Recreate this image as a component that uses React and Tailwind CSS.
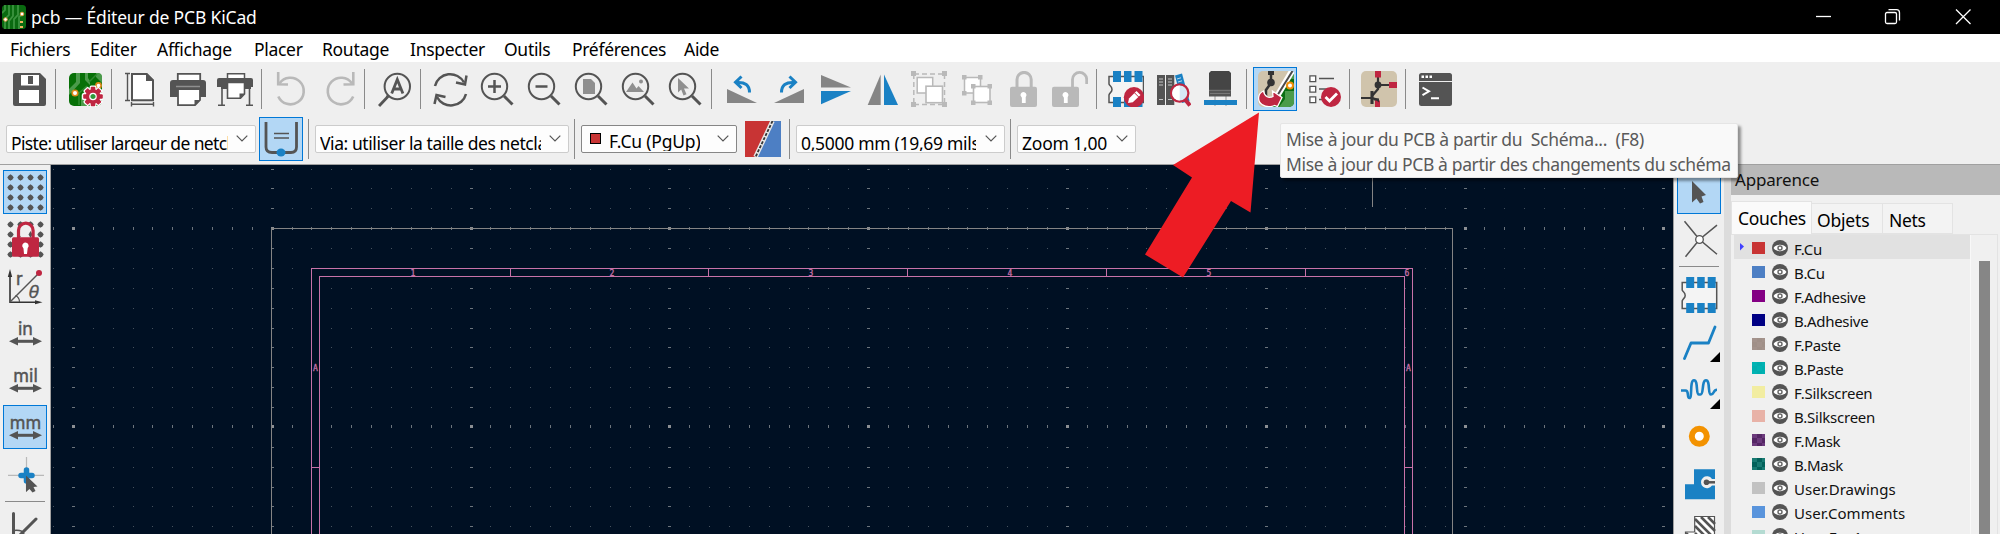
import React from "react";

const G = "#545454";
const B = "#1a81c4";
const R = "#bf2641";
const L = "#b9b9b9";

function Svg({ children, className = "" }) {
  return (
    <svg viewBox="0 0 36 36" fill="none" className={"block size-9 shrink-0 " + className}>
      {children}
    </svg>
  );
}

/* ---------- top toolbar icons ---------- */

const Save = () => (
  <Svg>
    <path d="M4 2H29L35 8V33a2 2 0 0 1-2 2H4a2 2 0 0 1-2-2V4a2 2 0 0 1 2-2Z" fill={G} />
    <path d="M10 4H28V14.5H10Z" fill="#fff" />
    <path d="M17 5H22V13H17Z" fill={G} />
    <path d="M8 19H28V32H8Z" fill="#fff" />
  </Svg>
);

const gearTeeth = [0, 45, 90, 135, 180, 225, 270, 315];

const BoardSetup = () => (
  <Svg>
    <rect x="2" y="2" width="33" height="33" rx="5" fill="#077007" />
    <path d="M2 18 9 11V2h4v10l-11 12ZM18 2v7l5 5v-4l-2-3V2h8v4l6 6V6a4 4 0 0 0-4-4ZM14 35V24l6-6 4 4-5 6v7Z" fill="#4b9b4b" />
    <path d="M30 3 22 11M12 34V22l8-7" stroke="#2f8a2f" strokeWidth="1.5" />
    <circle cx="8" cy="22" r="2.8" fill="#fff" stroke="#df8a1b" strokeWidth="1.6" />
    <circle cx="31.5" cy="14.500" r="2.6" fill="#fff" stroke="#df8a1b" strokeWidth="1.6" />
    <g transform="translate(26 25.500)">
      {gearTeeth.map((a) => (
        <rect key={"o" + a} x="-3.4" y="-11" width="6.8" height="8" rx="1.5" fill="#fff" transform={`rotate(${a})`} />
      ))}
      <circle r="8.500" fill="#fff" />
      {gearTeeth.map((a) => (
        <rect key={a} x="-2.3" y="-9.8" width="4.600" height="7" rx="1" fill={R} transform={`rotate(${a})`} />
      ))}
      <circle r="7.3" fill={R} />
      <circle r="3.2" fill="#2f9a3a" stroke="#fff" strokeWidth="1.2" />
    </g>
  </Svg>
);

const Page = () => (
  <Svg>
    <path d="M9 3H23.500L30 9.500V29.300H9Z" fill="#fff" stroke={G} strokeWidth="2" />
    <path d="M23 2H24L31 9V10H23Z" fill={G} />
    <path d="M4.500 2.500V29.500M2 2.500H7M2 29.500H7M8.500 33.300H30.500M8.500 31V35.500M30.500 31V35.500" stroke={G} strokeWidth="1.400" />
  </Svg>
);

const Print = () => (
  <Svg>
    <path d="M7.800 11V2.800H30.200V11" fill="#fff" stroke={G} strokeWidth="1.800" />
    <path d="M3 9H33a3 3 0 0 1 3 3V26H0V12a3 3 0 0 1 3-3Z" fill={G} />
    <path d="M6 15.500H30" stroke="#8f8f8f" strokeWidth="1.500" />
    <path d="M8 18H30V29L25 34.200H8Z" fill="#fff" stroke={G} strokeWidth="1.800" />
    <path d="M24.500 29H30.500L24.500 35Z" fill={G} />
  </Svg>
);

const Plot = () => (
  <Svg>
    <path d="M10.500 8V2.800H27.500V8" fill="#fff" stroke={G} strokeWidth="1.500" />
    <path d="M2 7H34a2 2 0 0 1 2 2V16H0V9a2 2 0 0 1 2-2Z" fill={G} />
    <path d="M5 16V34M32.500 16V34M1 34.300H8M29 34.300H36" stroke={G} strokeWidth="1.600" />
    <path d="M4 17H10M28 17H34" stroke={G} strokeWidth="2" />
    <path d="M10.500 11.500H27.500V23L23.500 27.200H10.500Z" fill="#fff" stroke={G} strokeWidth="1.600" />
    <path d="M22.500 22.500H28L22.500 28Z" fill={G} />
  </Svg>
);

const UndoShape = () => (
  <g stroke={L} strokeWidth="2.600">
    <path d="M6.500 12.500A13.300 13.300 0 1 1 5.300 25.500" />
    <path d="M5.200 1V13.200L15 13.500" />
  </g>
);
const Undo = () => (
  <Svg>
    <UndoShape />
  </Svg>
);
const Redo = () => (
  <Svg>
    <g transform="translate(38.500 0) scale(-1 1)">
      <UndoShape />
    </g>
  </Svg>
);

const Find = () => (
  <Svg>
    <circle cx="21.300" cy="15.500" r="12.700" stroke={G} strokeWidth="2" />
    <path d="M12 24.500 10.500 26" stroke={G} strokeWidth="2" />
    <path d="M11.500 26 4 34" stroke={G} strokeWidth="2.800" strokeLinecap="square" />
    <path d="M15.700 22.500 21.300 8.500 26.900 22.500M17.500 18H25" stroke={G} strokeWidth="2.800" />
  </Svg>
);

const Refresh = () => (
  <Svg>
    <g stroke={G} strokeWidth="2.500">
      <path d="M3 15A15.500 15 0 0 1 32 11.500" />
      <path d="M34.500 4.500 33 13.500 24 11.500" />
      <path d="M34 23A15.500 15 0 0 1 5 26" />
      <path d="M2.500 33 4.500 24 13.500 26" />
    </g>
  </Svg>
);

const Lens = ({ children }) => (
  <Svg>
    {children}
    <circle cx="15.500" cy="15.500" r="12.700" stroke={G} strokeWidth="2" />
    <path d="M25 25 33.500 33.500" stroke={G} strokeWidth="3" />
  </Svg>
);
const ZoomIn = () => (
  <Lens>
    <path d="M9 15.500H22M15.500 9V22" stroke={G} strokeWidth="2.500" />
  </Lens>
);
const ZoomOut = () => (
  <Lens>
    <path d="M9.500 15.500H21.500" stroke={G} strokeWidth="2.500" />
  </Lens>
);
const ZoomPage = () => (
  <Lens>
    <path d="M10 8H18L22 12V23H10Z" fill="#8f8f8f" />
  </Lens>
);
const ZoomObjects = () => (
  <Lens>
    <path d="M6 21 12.500 11.500 16.500 17.500 18.500 15 24 21Z" fill="#8f8f8f" />
    <circle cx="21" cy="10.500" r="2" fill="#8f8f8f" />
  </Lens>
);
const ZoomSelection = () => (
  <Lens>
    <path d="M11 7V21.500L14.200 18.500 16.500 24.500 19.500 23.300 17 17.500H22Z" fill="#8f8f8f" />
  </Lens>
);

const RotateShape = () => (
  <g>
    <path d="M4 18V32H34Z" fill="#858585" />
    <path d="M26.500 21.500C26.500 14 22 11 14 11.500" stroke={B} strokeWidth="3" />
    <path d="M18.500 5.500 12.500 11.200 18.500 17" stroke={B} strokeWidth="3" />
  </g>
);
const RotateCcw = () => (
  <Svg>
    <RotateShape />
  </Svg>
);
const RotateCw = () => (
  <Svg>
    <g transform="translate(38 0) scale(-1 1)">
      <RotateShape />
    </g>
  </Svg>
);
const FlipV = () => (
  <Svg>
    <path d="M4 4V16.500H34Z" fill="#858585" />
    <path d="M4 20H34L4 33.300Z" fill={B} />
  </Svg>
);
const FlipH = () => (
  <Svg>
    <path d="M16.700 3.500V34H3.700Z" fill="#858585" />
    <path d="M20 3.500V34H34Z" fill={B} />
  </Svg>
);

const Group = () => (
  <Svg>
    <path d="M3 3H33M3 33.500H33" stroke={L} strokeWidth="1.500" strokeDasharray="5 3" />
    <path d="M2.800 3V33M33.500 3V33" stroke={L} strokeWidth="1.500" strokeDasharray="5 3" />
    <path d="M0 0h5v5H0ZM31 0h5v5h-5ZM0 31h5v5H0ZM31 31h5v5h-5Z" fill={L} />
    <rect x="6.200" y="6.500" width="15.500" height="15.500" fill="#fff" stroke={L} strokeWidth="1.500" />
    <rect x="15" y="15.200" width="16.500" height="16.500" fill="#fff" stroke={L} strokeWidth="1.600" />
  </Svg>
);
const Ungroup = () => (
  <Svg>
    <rect x="6.500" y="6.500" width="16" height="15.500" fill="#fff" stroke={L} strokeWidth="1.500" />
    <path d="M4 4h4.500v4.500H4ZM20 4h4.500v4.500H20ZM4 20h4.500v4.500H4Z" fill={L} />
    <rect x="15.500" y="15.500" width="16.500" height="16" fill="#fff" stroke={L} strokeWidth="1.600" />
    <path d="M13 13h4.500v4.500H13ZM29.500 13H34v4.500h-4.500ZM13 29.500h4.500V34H13ZM29.500 29.500H34V34h-4.500Z" fill={L} />
  </Svg>
);
const Lock = () => (
  <Svg>
    <path d="M12 17V8.500a7 7 0 0 1 14.200 0V17" stroke={L} strokeWidth="3" />
    <rect x="5" y="15.700" width="27" height="20.300" rx="2" fill={L} />
    <path d="M15.500 24.500a3 3 0 1 1 5.200 1.600V32h-3.800V26.800Z" fill="#fff" />
  </Svg>
);
const Unlock = () => (
  <Svg>
    <path d="M20.500 17V8.500a7 7 0 0 1 14.200 0V13" stroke={L} strokeWidth="2.800" />
    <rect x="0" y="15.700" width="27" height="20.300" rx="2" fill={L} />
    <path d="M10.500 24.500a3 3 0 1 1 5.200 1.600V32h-3.800V26.800Z" fill="#fff" />
  </Svg>
);

const FpBody = () => (
  <g>
    <path d="M35.500 5.500V31.500H1V24C1.500 21.500 4 21.500 4 18.500 4 15 1.500 15 1 13V5.500Z" stroke={G} strokeWidth="1.500" fill="#f4f4f4" />
    <path d="M5 0h8v11H5ZM16 0h7.500v11H16ZM26.500 0h8v11h-8ZM5 26h8v10H5ZM16 26h7.500v10H16ZM26.500 26h8v10h-8Z" fill={B} />
  </g>
);
const FpEditor = () => (
  <Svg>
    <FpBody />
    <circle cx="26" cy="26.300" r="10.200" fill={R} />
    <path d="M20 32 21 27.500 28.500 20 32.500 24 24.800 31.300Z" fill="#fff" />
    <path d="M26.500 21.800 30.700 26" stroke={R} strokeWidth="1" />
  </Svg>
);
const FpBrowser = () => (
  <Svg>
    <path d="M2 4h8v30H2ZM11 4h8.300v30H11Z" fill={G} />
    <path d="M4 8h4M4 11h4M4 14h4M13 8h4M13 11h4M13 14h4M4 28.500h4M13 28.500h4" stroke="#c4c4c4" strokeWidth="1.100" />
    <path d="M20 4.500 27 2.500 34.500 30 27 32Z" fill={B} />
    <path d="M22 8 26 6.800M23 11 27 9.800" stroke="#bcd9ee" strokeWidth="1" />
    <path d="M30.500 29 35 34.500" stroke={R} strokeWidth="4" />
    <circle cx="24.700" cy="22" r="8.700" fill="#d7e8f5" stroke={R} strokeWidth="2.200" />
    <path d="M24.700 14.500a7.500 7.500 0 0 0 0 15Z" fill="#fff" />
  </Svg>
);
const Viewer3d = () => (
  <Svg>
    <path d="M13 24V35M24 24V35" stroke="#b5b5b5" strokeWidth="1.500" />
    <path d="M9 0H27l2 2V19H7V2Z" fill="#454545" />
    <path d="M7 19H29V25.500H7Z" fill={G} />
    <path d="M7 19.300H29M8 22.500H28" stroke="#777" strokeWidth="1" />
    <path d="M2 29H35V34H2Z" fill={B} />
  </Svg>
);
const UpdatePcb = () => (
  <Svg>
    <rect width="36" height="36" rx="5" fill="#d0c4ac" />
    <path d="M34 0a4 4 0 0 1 2 4V31a5 5 0 0 1-5 5H13Z" fill="#0a6f12" />
    <path d="M31 0 24 13h5l3-5h4V3ZM36 20h-9v8l-6 8H31a5 5 0 0 0 5-5Z" fill="#4b9b4b" />
    <path d="M13 0V12L8 19V26" stroke="#333" strokeWidth="2.500" />
    <path d="M10 0h6v4h-6Z" fill="#333" />
    <circle cx="13" cy="11.500" r="3.800" fill="#333" />
    <path d="M34 0 15 32" stroke="#fff" strokeWidth="6" />
    <path d="M34.500 0 14 33" stroke="#4a4a4a" strokeWidth="2" />
    <circle cx="32" cy="14.500" r="3" fill="#fff" stroke="#f08f0a" strokeWidth="2" />
    <path d="M5.500 20C-.5 22.500-1 30 4 33.500 8 36.200 13 36 16.500 34.500L19.500 35.500 24 26.500 14.500 20 15 25.500C11 27.500 6.500 26 5.500 20Z" fill={R} stroke="#fff" strokeWidth="1.300" />
  </Svg>
);
const Drc = () => (
  <Svg>
    <path d="M4.900 4.900h5.800v5.800H4.900ZM4.900 15.400h5.800v5.800H4.900ZM4.900 25.900h5.800v5.800H4.900Z" fill="#fff" stroke={G} strokeWidth="1.300" />
    <path d="M14 7.500H29M14 18H22M14 28.500H20" stroke={G} strokeWidth="1.500" />
    <circle cx="26" cy="26" r="10" fill={R} />
    <path d="M20.500 26 24.500 30 32 22.500" stroke="#fff" strokeWidth="2.800" />
  </Svg>
);
const Schematic = () => (
  <Svg>
    <rect width="36" height="36" rx="5" fill="#d0c4ac" />
    <path d="M0 27H11M17 5V15M17 14H30M17 14V18L11 25M11 20V33M12 27 17 31" stroke="#333" strokeWidth="2.200" />
    <path d="M11 20V33" stroke="#333" strokeWidth="3" />
    <circle cx="17" cy="14" r="3.400" fill="#333" />
    <path d="M14 0h6v6.500h-6ZM28 11h8v6h-8ZM14 29.500h5V36h-5Z" fill={R} />
    <path d="M12 26.500 18 31.500V27.500Z" fill="#333" />
  </Svg>
);
const Console = () => (
  <Svg>
    <rect x="2" y="2" width="33" height="33" rx="2.500" fill={G} />
    <path d="M2 10.500H35" stroke="#efefef" strokeWidth="1" />
    <path d="M4.500 4.500h2.500v2.500h-2.500ZM8.500 4.500h2.500v2.500h-2.500ZM12.500 4.500h2.500v2.500h-2.500Z" fill="#fff" />
    <path d="M5.500 16.500 12 20.300 5.500 24.200M14 27.300H22" stroke="#fff" strokeWidth="2" />
  </Svg>
);

/* ---------- side toolbar icons ---------- */

const gridStops = [2.5, 12.5, 22.5, 32.5];
const GridDots = () => (
  <g fill={G}>
    {gridStops.map((y) =>
      gridStops.map((x) => (
        <path key={x + "-" + y} d={`M${x} ${y - 3.300}l2 1.600 1.200 1.700-1.200 1.700-2 1.600-2-1.600-1.200-1.700 1.200-1.700Z`} />
      ))
    )}
  </g>
);
const Grid = () => (
  <Svg className="overflow-visible">
    <GridDots />
  </Svg>
);
const GridLock = () => (
  <Svg className="overflow-visible">
    <GridDots />
    <path d="M9 18V9.500a8.700 8.700 0 0 1 17.400 0V18Z" fill="#efefef" />
    <path d="M11 12.500l1.800 2-1.800 2ZM22.500 9l2 3.500-2 3.500-2-3.500Z" fill={G} />
    <path d="M10.500 18V8.500a7.300 7.300 0 0 1 14.600 0V18" stroke={R} strokeWidth="3.200" />
    <rect x="4" y="15.300" width="27" height="19.500" rx="1.500" fill={R} />
    <path d="M14.300 24.500a3.200 3.200 0 1 1 5.400 1.600L19 32h-3l-.5-5.500Z" fill="#fff" />
  </Svg>
);
const Polar = () => (
  <Svg className="overflow-visible">
    <path d="M2 5V33.300H30" stroke="#333" strokeWidth="1.600" />
    <path d="M2 0 4.200 8H-.2ZM34.500 33.300 27 31.300V35.300Z" fill="#333" />
    <path d="M2 33 30 5" stroke={G} strokeWidth="1.500" />
    <path d="M7.500 26.500C10.500 28 11.500 30 11.500 33" stroke={G} strokeWidth="1.200" />
    <circle cx="31" cy="4" r="3" fill={R} />
    <text x="8" y="16" fontSize="18" fill={G} stroke={G} strokeWidth=".4" fontFamily="Inter, sans-serif">r</text>
    <text x="20.500" y="29" fontSize="19" fontStyle="italic" fill={G} stroke={G} strokeWidth=".3" fontFamily="Liberation Sans, sans-serif">θ</text>
  </Svg>
);
const Unit = ({ label }) => (
  <Svg className="overflow-visible">
    <text x="17.500" y="19" fontSize="18" textAnchor="middle" fill={G} stroke={G} strokeWidth=".4" fontFamily="Inter, sans-serif">
      {label}
    </text>
    <path d="M8 25.300H27" stroke={G} strokeWidth="3" />
    <path d="M1 25.300 10 21.100V29.500ZM34 25.300 25 21.100V29.500Z" fill={G} />
  </Svg>
);
const CursorShape = () => (
  <Svg>
    <path d="M-1 18.400H36M18.500 -1V34.500" stroke={L} strokeWidth="1.200" />
    <path d="M13 18.400H24M18.500 13V24" stroke={B} strokeWidth="5.500" strokeLinecap="round" />
    <path d="M18 18.500V35L21.500 32 24.500 35.500 27.500 34 25.500 30 29.500 29.500Z" fill={G} />
  </Svg>
);
const Ratsnest = () => (
  <Svg>
    <path d="M5.500 1.500V36M6 29 28 7" stroke={G} strokeWidth="3" strokeLinecap="round" />
    <path d="M6 18.500C11 18 15 19 16 22" stroke={G} strokeWidth="1.500" />
  </Svg>
);

const Pointer = () => (
  <Svg>
    <path d="M10 6V27.500L14.500 23.500 18 28.500 21.500 27 19.500 21.500 24 20Z" fill={G} />
  </Svg>
);
const LocalRatsnest = () => (
  <Svg className="overflow-visible">
    <path d="M2.500-.8 17.500 17.500 3.500 34.700M35 3.200 17.500 17.500 35 32.200" stroke={G} strokeWidth="1.500" />
    <circle cx="17.500" cy="17.500" r="3.800" fill="#fff" stroke={G} strokeWidth="1.300" />
  </Svg>
);
const AddFp = () => (
  <Svg className="overflow-visible">
    <g transform="translate(-.8 0)">
      <FpBody />
    </g>
  </Svg>
);
const Route = () => (
  <Svg>
    <path d="M2.500 34.500 9 19H26.500L33 3" stroke={B} strokeWidth="2.800" strokeLinecap="round" strokeLinejoin="round" />
  </Svg>
);
const Tune = () => (
  <Svg className="overflow-visible">
    <path d="M-1 19.500H3.500C7.500 19.500 4.500 27 7.500 27 10.500 27 7.500 9.300 12 9.300 16.500 9.300 13.500 23.500 17 23.500H18.500C22 23.500 19.500 9.300 24 9.300 28.500 9.300 25.500 23.500 29 23.500 32.500 23.500 31 18.800 35 18.800" stroke={B} strokeWidth="2.600" />
  </Svg>
);
const Via = () => (
  <Svg>
    <circle cx="17.300" cy="18.300" r="7.500" fill="#fff" stroke="#f39200" strokeWidth="6" />
  </Svg>
);
const Zone = () => (
  <Svg>
    <path d="M12 4.300H33V34.300H3V19.300H12Z" fill={B} />
    <path d="M33 14H30A6 6 0 1 0 30 20.600H33Z" fill="#efefef" />
    <path d="M24 17.300H33" stroke={G} strokeWidth="2.500" />
    <circle cx="24.500" cy="17.300" r="2.800" fill={G} />
  </Svg>
);
const RuleArea = () => (
  <Svg>
    <path d="M12.700 4.500H32.500V36H3.500V20H12.700Z" fill="#fff" stroke={G} strokeWidth="1.200" />
    <path d="M13 7 33 27M13 14 33 34M13 21 29 37M19 5 33 19M26 5 33 12M4 21 20 37" stroke={G} strokeWidth="2.600" />
  </Svg>
);

/* ---------- toolbar pieces ---------- */

function Tool({ icon: Icon, active, corner, side }) {
  return (
    <div
      className={
        "relative flex size-11 shrink-0 items-start border pl-1 " +
        (side ? "pt-1 " : "pt-[3px] ") +
        (active ? "border-[#0078d7] bg-[#b3d7f5]" : "border-transparent")
      }
    >
      <Icon />
      {corner && (
        <svg viewBox="0 0 10 10" className="absolute right-0 bottom-0 size-2.5">
          <path d="M10 0V10H0Z" fill="#000" />
        </svg>
      )}
    </div>
  );
}

const VSep = () => <div className="mt-0.5 ml-0.5 mr-1.5 h-10 w-px shrink-0 bg-[#8a8a8a]" />;

const topTools = [
  Save, null, BoardSetup, null, Page, Print, Plot, null, Undo, Redo, null, Find, null,
  Refresh, ZoomIn, ZoomOut, ZoomPage, ZoomObjects, ZoomSelection, null,
  RotateCcw, RotateCw, FlipV, FlipH, Group, Ungroup, Lock, Unlock, null,
  FpEditor, FpBrowser, Viewer3d, null, UpdatePcb, Drc, null, Schematic, null, Console,
];

function Combo({ className, textClass, dark, children }) {
  return (
    <div
      className={
        "flex h-7 shrink-0 items-start justify-between rounded-xs border bg-[#fdfdfd] pl-1 " +
        (dark ? "border-[#868686] " : "border-[#cccccc] ") +
        className
      }
    >
      <div className={"flex h-[25px] items-start overflow-hidden whitespace-nowrap text-[17.500px] " + textClass}>{children}</div>
      <svg viewBox="0 0 12 7" fill="none" className="mt-[9px] mr-[7px] h-[7px] w-3 shrink-0">
        <path d="M.7.7 6 6 11.300.7" stroke="#555" strokeWidth="1.200" />
      </svg>
    </div>
  );
}

/* ---------- drawing canvas ---------- */

const gridY = [169, 188, 208, 228, 248, 268, 288, 308, 328, 347, 367, 387, 407, 426, 447, 467, 487, 506, 526];
const gridX = Array.from({ length: 82 }, (_, i) => ({ x: Math.floor(73.4 + (i - 1) * 19.88), major: (i - 1) % 10 === 0 }));
const PINK = "#c872a8";
const columns = [
  ["1", 413], ["2", 612], ["3", 811], ["4", 1010], ["5", 1209], ["6", 1407],
];

function Canvas() {
  return (
    <svg viewBox="51 165 1622 369" className="block h-[369px] w-[1622px]">
      <rect x="51" y="165" width="1622" height="369" fill="#001023" />
      <g shapeRendering="crispEdges">
        {gridY.map((y) =>
          gridX.map(({ x, major }) => {
            const row = y === 228 || y === 426;
            return (
              <rect
                key={x + "-" + y}
                x={major ? x - 1 : x}
                y={row ? y - 1 : y}
                width={major ? 3 : 1}
                height={row ? 3 : 1}
                fill={major && row ? "#8c8f93" : major || row ? "#6d757d" : "#46525e"}
              />
            );
          })
        )}
        <path d="M271.500 534V228.500H1452.500V534M1372.500 165V207" stroke="#848484" fill="none" />
        <g stroke={PINK} fill="none">
          <path d="M311.500 534V268.500H1412.500V534M319.500 534V276.500H1404.500V534" />
          <path d="M510.500 268V276M708.500 268V276M907.500 268V276M1106.500 268V276M1305.500 268V276M311 467.500H320M1404 467.500H1413" />
        </g>
      </g>
      <g fill={PINK} fontSize="8" fontFamily="DejaVu Sans Mono, monospace" textAnchor="middle" stroke={PINK} strokeWidth=".3">
        {columns.map(([n, x]) => (
          <text key={n} x={x} y="275.500">{n}</text>
        ))}
        <text x="315.500" y="371">A</text>
        <text x="1408.500" y="371">A</text>
      </g>
    </svg>
  );
}

/* ---------- appearance panel ---------- */

const layers = [
  ["F.Cu", "#c83434", "#c83434", "tracking-[-0.200px]"],
  ["B.Cu", "#4d7fc4", "#4d7fc4", "tracking-[-0.200px]"],
  ["F.Adhesive", "#840084", "#840084", "tracking-[-0.300px]"],
  ["B.Adhesive", "#000084", "#000084", "tracking-[-0.300px]"],
  ["F.Paste", "#a4938c", "#a09088", "tracking-[-0.400px]"],
  ["B.Paste", "#00b3b3", "#00aeae", "tracking-[-0.400px]"],
  ["F.Silkscreen", "#f2eda1", "#f2eda1", "tracking-[-0.250px]"],
  ["B.Silkscreen", "#e8b2a7", "#e8b2a7", "tracking-[-0.250px]"],
  ["F.Mask", "#6c3a7c", "#552665", "tracking-[-0.300px]"],
  ["B.Mask", "#187a72", "#02615a", "tracking-[-0.300px]"],
  ["User.Drawings", "#c2c2c2", "#c2c2c2", "tracking-[0.050px]"],
  ["User.Comments", "#5994dc", "#5994dc", "tracking-[0.050px]"],
  ["User.Eco1", "#b4dbd2", "#b4dbd2", "tracking-[0.050px]"],
];

function Layer({ name, a, b, cls, current }) {
  return (
    <div className={"flex h-6 shrink-0 items-center " + (current ? "bg-[#e1e1e1]" : "")}>
      <svg viewBox="0 0 18 24" className="block h-6 w-[18px] shrink-0">
        {current && <path d="M6 8 10 11.500 6 15.500Z" fill="#4040ff" />}
      </svg>
      <svg viewBox="0 0 13 12" shapeRendering="crispEdges" className="mt-0.5 block h-3 w-[13px] shrink-0">
        <rect width="13" height="12" fill={a} />
        <path d="M5 0h5v4H5ZM0 4h5v5H0ZM10 4h3v5h-3ZM5 9h5v3H5Z" fill={b} />
      </svg>
      <svg viewBox="0 0 16 16" className="mt-0.5 ml-[7px] block size-4 shrink-0">
        <circle cx="8" cy="8" r="8" fill={G} />
        <path d="M1.500 8C4 3.800 12 3.800 14.500 8 12 12.200 4 12.200 1.500 8Z" fill="#fff" />
        <circle cx="8" cy="8" r="2" fill="#fff" stroke="#666" strokeWidth="1.400" />
      </svg>
      <span className={"ml-1.5 pt-[3px] text-[15px] leading-6 text-[#111] " + cls}>{name}</span>
    </div>
  );
}

function Panel() {
  return (
    <div className="flex h-[369px] w-[269px] shrink-0 flex-col overflow-hidden bg-[#f0f0f0]">
      <div className="h-[30px] shrink-0 bg-[#b9b9b9] pl-1 text-[17px] leading-[30px] tracking-[-0.200px] text-[#111]">Apparence</div>
      <div className="flex h-[39px] shrink-0 items-end pt-1.5 text-[17.500px]">
        <div className="h-[33px] w-[81px] border border-b-0 border-[#e3e3e3] bg-[#fafafa] pl-[6px] leading-[33px] tracking-[-0.300px]">Couches</div>
        <div className="h-[31px] w-[71px] border-t border-r border-b border-[#e3e3e3] bg-[#f3f3f3] pl-[5px] leading-[33px] tracking-[-0.200px]">Objets</div>
        <div className="h-[31px] w-[70px] border-t border-r border-b border-[#e3e3e3] bg-[#f3f3f3] pl-[6px] leading-[33px] tracking-[-0.300px]">Nets</div>
      </div>
      <div className="mr-[2px] flex h-[300px] border-t border-r border-[#e3e3e3] pl-[3px]">
        <div className="flex w-[236px] flex-col overflow-hidden">
          {layers.map(([n, a, b, c], i) => (
            <Layer key={n} name={n} a={a} b={b} cls={c} current={i === 0} />
          ))}
        </div>
        <div className="flex w-[27px] justify-center border-l border-[#f8f8f8] pt-[26px]">
          <div className="h-full w-[11px] bg-[#868686]" />
        </div>
      </div>
    </div>
  );
}

const menus = [
  ["Fichiers", "w-20"],
  ["Editer", "w-[67px]"],
  ["Affichage", "w-[97px]"],
  ["Placer", "w-[68px]"],
  ["Routage", "w-[88px]"],
  ["Inspecter", "w-[94px]"],
  ["Outils", "w-[68px]"],
  ["Préférences", "w-28"],
  ["Aide", "w-12"],
];

const HSep = () => <div className="mt-[2px] mb-0.5 ml-0.5 h-px w-10 shrink-0 bg-[#8a8a8a]" />;

export default function App() {
  return (
    <div className="relative h-[534px] w-[2000px] overflow-hidden bg-[#efefef] font-['Noto_Sans',sans-serif] text-[17.500px] text-black">
      <div className="flex h-[34px] items-center bg-black pl-0.5 text-white">
        <svg viewBox="0 0 24 24" fill="none" className="block size-6">
          <rect width="24" height="24" rx="3.500" fill="#0a6a10" />
          <path d="M3 24V14l4-4V0M7 24v-8l4-5V0M12 24V14l4-4V0M0 8l3-3V0M17 24V12l4-3" stroke="#3c9440" strokeWidth="1.800" />
          <circle cx="3.500" cy="14.500" r="1.800" fill="#fff" stroke="#e8a04a" />
          <circle cx="20" cy="9" r="1.800" fill="#fff" stroke="#e8a04a" />
          <path d="M18 17h3M18 22h3" stroke="#f2b25e" strokeWidth="2" />
        </svg>
        <span className="ml-[5px] w-[1773px] whitespace-nowrap tracking-[-0.170px]">pcb — Éditeur de PCB KiCad</span>
        <svg viewBox="0 0 180 24" fill="none" className="block h-6 w-[180px]" stroke="#fff" strokeWidth="1.300">
          <path d="M12 11.500H27" />
          <rect x="81.500" y="7.500" width="11" height="11" rx="1.500" />
          <path d="M84.500 4.700H92.500a3 3 0 0 1 3 3V15.500" />
          <path d="M152 4.500 166.500 19M166.500 4.500 152 19" />
        </svg>
      </div>

      <div className="flex h-7 items-center bg-white pl-2.5 leading-8 tracking-[-0.300px] whitespace-nowrap">
        {menus.map(([m, c]) => (
          <div key={m} className={"shrink-0 pt-0.5 " + c}>{m}</div>
        ))}
      </div>

      <div className="flex h-[54px] items-start pt-[5px] pl-1.5">
        {topTools.map((T, i) =>
          T ? (
            <div key={i} className="mr-[3px] shrink-0">
              <Tool icon={T} active={T === UpdatePcb} />
            </div>
          ) : (
            <VSep key={i} />
          )
        )}
      </div>

      <div className="flex h-[49px] items-start border-b border-[#a0a0a0] pl-1.5">
        <Combo className="mt-[9px] w-[250px]" textClass="w-[217px] leading-[34px] tracking-[-0.620px]">Piste: utiliser largeur de netclass</Combo>
        <div className="mt-px ml-[3px] flex size-11 shrink-0 items-center justify-center border border-[#0078d7] bg-[#b3d7f5]">
          <Svg>
            <path d="M3 1V26Q3 31.500 9 31.500H28Q33.500 31.500 33.500 26V1" stroke={G} strokeWidth="2.800" />
            <path d="M11 12.500H26M11 17H26" stroke={G} strokeWidth="1.500" />
            <ellipse cx="18" cy="31.500" rx="4.500" ry="4" fill={B} />
          </Svg>
        </div>
        <div className="mt-[3px] ml-[5px] h-10 w-px shrink-0 bg-[#8a8a8a]" />
        <Combo className="mt-[9px] ml-1.5 w-[254px]" textClass="w-[221px] leading-[34px] tracking-[-0.420px]">Via: utiliser la taille des netclass</Combo>
        <div className="mt-[3px] ml-[5px] h-10 w-px shrink-0 bg-[#8a8a8a]" />
        <Combo dark className="mt-[9px] ml-1.5 w-[156px]" textClass="leading-[31px] tracking-[-0.200px]">
          <span className="mt-[7px] mr-2 ml-1 block size-[11px] border border-black bg-[#c83434]" />
          F.Cu (PgUp)
        </Combo>
        <svg viewBox="0 0 36 36" className="mt-[5px] ml-2 block size-9 shrink-0">
          <rect width="36" height="36" fill="#c83434" />
          <path d="M27 0H36V36H10Z" fill="#4d7fc4" />
          <path d="M27.500 0 10.500 36" stroke="#e8e8e8" strokeWidth="4.500" />
          <path d="M27.500 0 10.500 36" stroke="#333" strokeWidth="1.800" strokeDasharray="3 1.500" />
        </svg>
        <div className="mt-[3px] ml-2 h-10 w-px shrink-0 bg-[#8a8a8a]" />
        <Combo className="mt-[9px] ml-1.5 w-[209px]" textClass="w-[175px] leading-[34px] tracking-[-0.300px]">0,5000 mm (19,69 mils)</Combo>
        <div className="mt-[3px] ml-[5px] h-10 w-px shrink-0 bg-[#8a8a8a]" />
        <Combo className="mt-[9px] ml-1.5 w-[119px]" textClass="leading-[34px] tracking-[-0.200px]">Zoom 1,00</Combo>
      </div>

      <div className="flex h-[369px]">
        <div className="flex w-[50px] shrink-0 flex-col gap-[3px] pt-[5px] pl-[3px]">
          <Tool side icon={Grid} active />
          <Tool side icon={GridLock} />
          <Tool side icon={Polar} />
          <Tool side icon={() => <Unit label="in" />} />
          <Tool side icon={() => <Unit label="mil" />} />
          <Tool side icon={() => <Unit label="mm" />} active />
          <Tool side icon={CursorShape} />
          <HSep />
          <Tool side icon={Ratsnest} />
        </div>
        <div className="shrink-0 border-x border-x-[#a0a0a0]">
          <Canvas />
        </div>
        <div className="flex w-[50px] shrink-0 flex-col gap-[3px] pt-[5px] pl-[3px]">
          <Tool side icon={Pointer} active />
          <Tool side icon={LocalRatsnest} />
          <HSep />
          <Tool side icon={AddFp} />
          <Tool side icon={Route} corner />
          <Tool side icon={Tune} corner />
          <Tool side icon={Via} />
          <Tool side icon={Zone} />
          <Tool side icon={RuleArea} />
        </div>
        <div className="h-full w-[7px] shrink-0 bg-[#dcdcdc]" />
        <Panel />
      </div>

      <svg viewBox="1140 105 130 180" className="absolute top-[105px] left-[1140px] h-[180px] w-[130px]">
        <path d="M1259 112.500 1173 165 1192 177.500 1145 254.500 1183 277.500 1231 201 1250.500 212.500Z" fill="#ed1c24" />
      </svg>

      <div className="absolute top-[123px] left-[1280px] h-[55px] w-[458px] rounded-xs border border-[#e5e5e5] bg-[#f9f9f9] pt-[3px] pl-[5px] text-[17.500px] leading-[25px] whitespace-pre text-[#5a5a5a] shadow-[3px_3px_3px_rgba(0,0,0,0.4)]">
        <div className="tracking-[-0.300px]">{"Mise à jour du PCB à partir du  Schéma...  (F8)"}</div>
        <div className="tracking-[-0.360px]">Mise à jour du PCB à partir des changements du schéma</div>
      </div>
    </div>
  );
}
